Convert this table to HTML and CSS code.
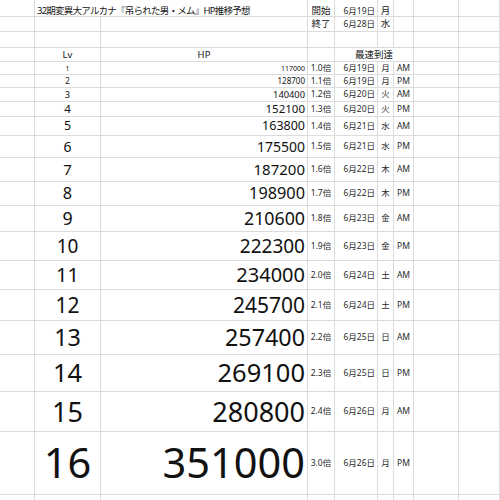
FILE: index.html
```html
<!DOCTYPE html>
<html lang="ja">
<head>
<meta charset="utf-8">
<link rel="stylesheet" href="styles.css">
</head>
<body>
<div class="sheet">
  <div class="row r-title">
    <div class="c"></div>
    <div class="c span2 left title">32期変異大アルカナ『吊られた男・メム』HP推移予想</div>
    <div class="c mid">開始</div>
    <div class="c right sm">6月19日</div>
    <div class="c mid">月</div>
    <div class="c"></div><div class="c"></div><div class="c"></div>
  </div>
  <div class="row">
    <div class="c"></div><div class="c"></div><div class="c"></div>
    <div class="c mid">終了</div>
    <div class="c right sm">6月28日</div>
    <div class="c mid">水</div>
    <div class="c"></div><div class="c"></div><div class="c"></div>
  </div>
  <div class="row">
    <div class="c"></div><div class="c"></div><div class="c"></div><div class="c"></div><div class="c"></div><div class="c"></div><div class="c"></div><div class="c"></div><div class="c"></div>
  </div>
  <div class="row">
    <div class="c"></div>
    <div class="c mid hd">Lv</div>
    <div class="c mid hd">HP</div>
    <div class="c"></div>
    <div class="c span3 mid hd">最速到達</div>
    <div class="c"></div><div class="c"></div>
  </div>
  <div class="row l1"><div class="c"></div><div class="c mid big">1</div><div class="c right big">117000</div><div class="c mid sm">1.0倍</div><div class="c right sm">6月19日</div><div class="c mid sm">月</div><div class="c mid sm">AM</div><div class="c"></div><div class="c"></div></div>
  <div class="row l2"><div class="c"></div><div class="c mid big">2</div><div class="c right big">128700</div><div class="c mid sm">1.1倍</div><div class="c right sm">6月19日</div><div class="c mid sm">月</div><div class="c mid sm">PM</div><div class="c"></div><div class="c"></div></div>
  <div class="row l3"><div class="c"></div><div class="c mid big">3</div><div class="c right big">140400</div><div class="c mid sm">1.2倍</div><div class="c right sm">6月20日</div><div class="c mid sm">火</div><div class="c mid sm">AM</div><div class="c"></div><div class="c"></div></div>
  <div class="row l4"><div class="c"></div><div class="c mid big">4</div><div class="c right big">152100</div><div class="c mid sm">1.3倍</div><div class="c right sm">6月20日</div><div class="c mid sm">火</div><div class="c mid sm">PM</div><div class="c"></div><div class="c"></div></div>
  <div class="row l5"><div class="c"></div><div class="c mid big">5</div><div class="c right big">163800</div><div class="c mid sm">1.4倍</div><div class="c right sm">6月21日</div><div class="c mid sm">水</div><div class="c mid sm">AM</div><div class="c"></div><div class="c"></div></div>
  <div class="row l6"><div class="c"></div><div class="c mid big">6</div><div class="c right big">175500</div><div class="c mid sm">1.5倍</div><div class="c right sm">6月21日</div><div class="c mid sm">水</div><div class="c mid sm">PM</div><div class="c"></div><div class="c"></div></div>
  <div class="row l7"><div class="c"></div><div class="c mid big">7</div><div class="c right big">187200</div><div class="c mid sm">1.6倍</div><div class="c right sm">6月22日</div><div class="c mid sm">木</div><div class="c mid sm">AM</div><div class="c"></div><div class="c"></div></div>
  <div class="row l8"><div class="c"></div><div class="c mid big">8</div><div class="c right big">198900</div><div class="c mid sm">1.7倍</div><div class="c right sm">6月22日</div><div class="c mid sm">木</div><div class="c mid sm">PM</div><div class="c"></div><div class="c"></div></div>
  <div class="row l9"><div class="c"></div><div class="c mid big">9</div><div class="c right big">210600</div><div class="c mid sm">1.8倍</div><div class="c right sm">6月23日</div><div class="c mid sm">金</div><div class="c mid sm">AM</div><div class="c"></div><div class="c"></div></div>
  <div class="row l10"><div class="c"></div><div class="c mid big">10</div><div class="c right big">222300</div><div class="c mid sm">1.9倍</div><div class="c right sm">6月23日</div><div class="c mid sm">金</div><div class="c mid sm">PM</div><div class="c"></div><div class="c"></div></div>
  <div class="row l11"><div class="c"></div><div class="c mid big">11</div><div class="c right big">234000</div><div class="c mid sm">2.0倍</div><div class="c right sm">6月24日</div><div class="c mid sm">土</div><div class="c mid sm">AM</div><div class="c"></div><div class="c"></div></div>
  <div class="row l12"><div class="c"></div><div class="c mid big">12</div><div class="c right big">245700</div><div class="c mid sm">2.1倍</div><div class="c right sm">6月24日</div><div class="c mid sm">土</div><div class="c mid sm">PM</div><div class="c"></div><div class="c"></div></div>
  <div class="row l13"><div class="c"></div><div class="c mid big">13</div><div class="c right big">257400</div><div class="c mid sm">2.2倍</div><div class="c right sm">6月25日</div><div class="c mid sm">日</div><div class="c mid sm">AM</div><div class="c"></div><div class="c"></div></div>
  <div class="row l14"><div class="c"></div><div class="c mid big">14</div><div class="c right big">269100</div><div class="c mid sm">2.3倍</div><div class="c right sm">6月25日</div><div class="c mid sm">日</div><div class="c mid sm">PM</div><div class="c"></div><div class="c"></div></div>
  <div class="row l15"><div class="c"></div><div class="c mid big">15</div><div class="c right big">280800</div><div class="c mid sm">2.4倍</div><div class="c right sm">6月26日</div><div class="c mid sm">月</div><div class="c mid sm">AM</div><div class="c"></div><div class="c"></div></div>
  <div class="row l16"><div class="c"></div><div class="c mid big">16</div><div class="c right big">351000</div><div class="c mid sm">3.0倍</div><div class="c right sm">6月26日</div><div class="c mid sm">月</div><div class="c mid sm">PM</div><div class="c"></div><div class="c"></div></div>
  <div class="row">
    <div class="c"></div><div class="c"></div><div class="c"></div><div class="c"></div><div class="c"></div><div class="c"></div><div class="c"></div><div class="c"></div><div class="c"></div>
  </div>
</div>
</body>
</html>
```
FILE: styles.css
```css
html, body {
  margin: 0;
  padding: 0;
  background: #ffffff;
}
body {
  width: 500px;
  height: 500px;
  overflow: hidden;
  font-family: "Noto Sans", "Noto Sans CJK JP", sans-serif;
  color: #161616;
}
.sheet {
  display: grid;
  width: 500px;
  grid-template-columns: 35px 66px 207px 27px 43px 16px 20px 45px 41px;
  grid-template-rows: 17px 15px 16px 14px 13px 13px 14px 15px 19px 22px 24px 24px 26px 29px 29px 31px 34px 37px 40px 63px 30px;
}
.row {
  display: contents;
}
.c {
  box-sizing: border-box;
  border-right: 1px solid #dcdcdc;
  border-bottom: 1px solid #dcdcdc;
  display: flex;
  align-items: center;
  white-space: nowrap;
  overflow: visible;
  font-size: 9.5px;
  line-height: 1;
  padding: 0 2px;
}
.left { justify-content: flex-start; }
.mid { justify-content: center; }
.right { justify-content: flex-end; }
.span2 { grid-column: span 2; }
.span3 { grid-column: span 3; }
.r-title .c { padding-top: 6px; }
.title { font-size: 9.5px; letter-spacing: -0.75px; }
.hd { font-size: 9.5px; }
.sm { font-size: 8.5px; color: #2a2a2a; }
.big { color: #111; }
.l1 .big { font-size: 7px; }
.l2 .big { font-size: 8px; }
.l3 .big { font-size: 9.3px; }
.l4 .big { font-size: 11.5px; }
.l5 .big { font-size: 12.5px; }
.l6 .big { font-size: 14px; }
.l7 .big { font-size: 15px; }
.l8 .big { font-size: 16.3px; }
.l9 .big { font-size: 17.8px; }
.l10 .big { font-size: 19px; }
.l11 .big { font-size: 20px; }
.l12 .big { font-size: 21px; }
.l13 .big { font-size: 23.3px; }
.l14 .big { font-size: 25.5px; }
.l15 .big { font-size: 27px; }
.l16 .big { font-size: 41.5px; }
```
